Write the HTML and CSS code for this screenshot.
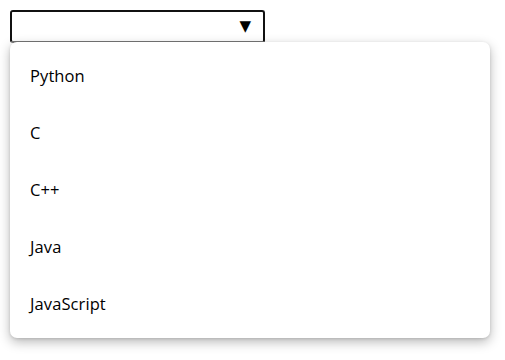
FILE: index.html
```html
<!DOCTYPE html>
<html>
<head>
<meta charset="utf-8">
<link rel="stylesheet" href="styles.css">
</head>
<body>
<div class="wrap">
  <div class="select">
    <span class="arrow">▼</span>
  </div>
  <ul class="menu">
    <li class="item">Python</li>
    <li class="item">C</li>
    <li class="item">C++</li>
    <li class="item">Java</li>
    <li class="item">JavaScript</li>
  </ul>
</div>
</body>
</html>
```
FILE: styles.css
```css
html, body {
  margin: 0;
  padding: 0;
  background: #fff;
}
body {
  font-family: "Open Sans", "Noto Sans", sans-serif;
  color: #000;
  min-height: 360px;
}
.wrap {
  padding: 10px 0 0 10px;
  width: 480px;
}
.select {
  box-sizing: border-box;
  width: 255px;
  height: 33px;
  border: 2px solid #111;
  border-bottom-color: #777;
  border-radius: 3px;
  display: flex;
  align-items: center;
  justify-content: flex-end;
  padding-right: 12px;
}
.arrow {
  font-size: 15px;
  line-height: 1;
  font-family: "DejaVu Sans", sans-serif;
}
.menu {
  position: relative;
  margin: -1px 0 0 0;
  width: 480px;
  padding: 5px 0 6px;
  list-style: none;
  background: #fff;
  border-radius: 7px;
  box-shadow: 0 4px 12px rgba(0,0,0,0.28), 0 1px 3px rgba(0,0,0,0.12);
  box-sizing: border-box;
}
.item {
  height: 57px;
  display: flex;
  align-items: center;
  padding-left: 20px;
  font-size: 16.5px;
  letter-spacing: 0.1px;
}
```
